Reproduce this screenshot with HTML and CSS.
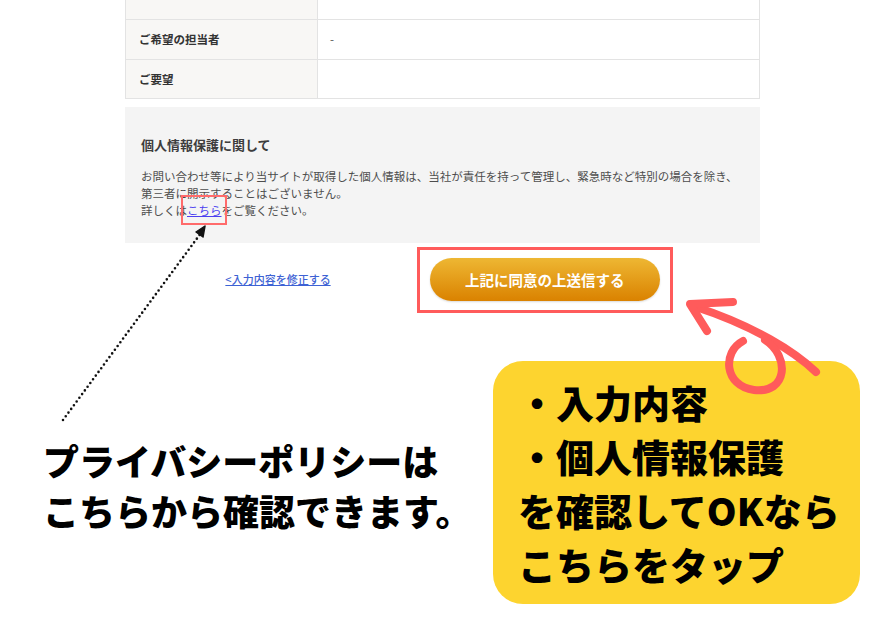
FILE: index.html
```html
<!DOCTYPE html>
<html lang="ja">
<head>
    <meta charset="UTF-8">
    <meta name="viewport" content="width=device-width, initial-scale=1.0">
    <title>送信内容の確認</title>
    <link rel="stylesheet" href="styles.css">
</head>
<body>

    <div class="form">
        <table class="confirm">
            <tr class="cut"><th></th><td></td></tr>
            <tr><th>ご希望の担当者</th><td>-</td></tr>
            <tr class="last"><th>ご要望</th><td></td></tr>
        </table>

        <div class="privacy">
            <h3>個人情報保護に関して</h3>
            <p>お問い合わせ等により当サイトが取得した個人情報は、当社が責任を持って管理し、緊急時など特別の場合を除き、<br>第三者に開示することはございません。<br>詳しくは<a href="#" class="policy-link">こちら</a>をご覧ください。</p>
        </div>

        <div class="actions">
            <a href="#" class="back-link">&lt;入力内容を修正する</a>
            <button type="button" class="submit-btn">上記に同意の上送信する</button>
        </div>
    </div>

    <div class="notes">
        <p class="policy-note">プライバシーポリシーは<br>こちらから確認できます。</p>
        <div class="tap-note">
            <p>・入力内容</p>
            <p>・個人情報保護</p>
            <p>を確認してOKなら</p>
            <p>こちらをタップ</p>
        </div>
    </div>

    <!-- annotation arrows -->
    <svg class="arrows" width="891" height="630" viewBox="0 0 891 630">
        <line x1="63" y1="420" x2="201" y2="233" stroke="#111" stroke-width="2.6" stroke-linecap="round" stroke-dasharray="0 4.6"/>
        <path d="M196 232 L205 226 L203 237 Z" fill="#111" stroke="#111" stroke-width="1.5" stroke-linejoin="round"/>

        <g fill="none" stroke="#ff5b5b" stroke-width="8" stroke-linecap="round" stroke-linejoin="round">
            <path d="M816 372 C 795 352, 755 326, 693 306"/>
            <path d="M733 302 L 690 304 L 707 331"/>
            <path d="M765 340 C 790 356, 788 394, 754 390 C 724 386, 722 352, 743 341"/>
        </g>
    </svg>

</body>
</html>
```

FILE: styles.css
```css
* {
    margin: 0;
    padding: 0;
    box-sizing: border-box;
}
body {
    position: relative;
    width: 891px;
    height: 630px;
    overflow: hidden;
    background: #ffffff;
    font-family: "Noto Sans CJK JP", "Noto Sans", sans-serif;
    color: #444;
}
.form {
    width: 635px;
    margin-left: 125px;
}
.confirm {
    width: 100%;
    border-collapse: collapse;
    font-size: 11.5px;
}
.confirm th,
.confirm td {
    border: 1px solid #e3e3e3;
    height: 40px;
    text-align: left;
    vertical-align: middle;
}
.confirm th {
    width: 192px;
    padding-left: 13px;
    background: #f8f7f5;
    color: #333;
    font-weight: 700;
}
.confirm td {
    padding-left: 12px;
    color: #555;
}
.confirm .cut th,
.confirm .cut td {
    height: 19px;
    border-top: none;
}
.confirm .last th,
.confirm .last td {
    height: 39px;
}
.privacy {
    margin-top: 8px;
    padding: 28px 16px 24px;
    background: #f4f4f4;
}
.privacy h3 {
    font-size: 13px;
    line-height: 20px;
    color: #3d3d3d;
    font-weight: 700;
    margin-bottom: 13px;
}
.privacy p {
    font-size: 11.5px;
    line-height: 17px;
    color: #4d4d4d;
    white-space: nowrap;
}
.policy-link {
    position: relative;
    color: #4c3ff0;
    text-decoration: underline;
}
.policy-link::after {
    content: "";
    position: absolute;
    left: -6px;
    right: -5px;
    top: -7px;
    bottom: -7px;
    border: 2px solid #ff6b6b;
}
.actions {
    display: flex;
    justify-content: center;
    align-items: center;
    gap: 99px;
    margin-top: 15px;
}
.back-link {
    font-size: 11px;
    font-weight: 500;
    color: #3d62d4;
    text-decoration: underline;
}
.submit-btn {
    position: relative;
    width: 230px;
    height: 43px;
    border: none;
    border-radius: 22px;
    background: linear-gradient(to bottom, #eeb733, #da8200);
    color: #ffffff;
    font-family: inherit;
    font-size: 14.5px;
    font-weight: 700;
    box-shadow: 0 1px 2px rgba(0, 0, 0, 0.15);
}
.submit-btn::after {
    content: "";
    position: absolute;
    left: -13px;
    right: -13px;
    top: -11px;
    bottom: -12px;
    border: 3px solid #ff5b5b;
}
.notes {
    display: flex;
    align-items: flex-start;
    margin-top: 60px;
    padding-left: 43px;
}
.policy-note {
    flex: 0 0 450px;
    margin-top: 74px;
    font-size: 36px;
    line-height: 50px;
    font-weight: 900;
    color: #000;
    white-space: nowrap;
}
.tap-note {
    width: 367px;
    height: 243px;
    padding: 14px 0 0 25px;
    border-radius: 30px;
    background: #fdd42f;
}
.tap-note p {
    font-size: 38px;
    line-height: 54px;
    font-weight: 900;
    color: #000;
    white-space: nowrap;
}
.arrows {
    position: absolute;
    left: 0;
    top: 0;
    pointer-events: none;
}
```
